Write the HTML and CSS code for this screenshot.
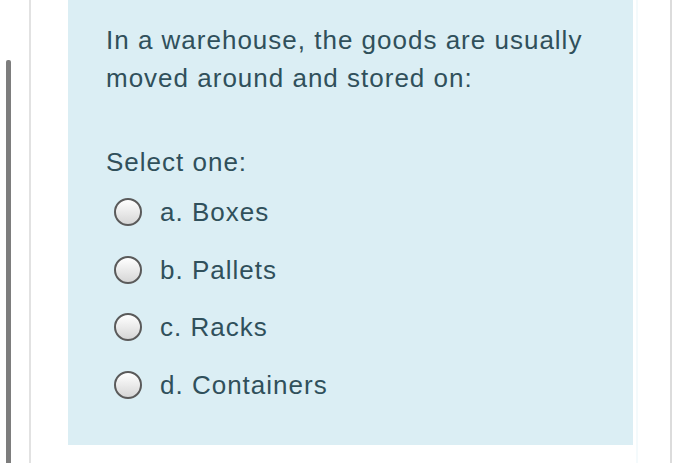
FILE: index.html
```html
<!DOCTYPE html>
<html>
<head>
<meta charset="utf-8">
<link rel="stylesheet" href="styles.css">
</head>
<body>
<div class="screen">
  <div class="gutter">
    <div class="scrollbar"></div>
    <div class="divider"></div>
  </div>
  <div class="panel">
    <div class="qtext">In a warehouse, the goods are usually moved around and stored on:</div>
    <div class="prompt">Select one:</div>
    <div class="answers">
      <div class="option"><span class="radio"></span><span class="label">a. Boxes</span></div>
      <div class="option"><span class="radio"></span><span class="label">b. Pallets</span></div>
      <div class="option"><span class="radio"></span><span class="label">c. Racks</span></div>
      <div class="option"><span class="radio"></span><span class="label">d. Containers</span></div>
    </div>
  </div>
  <div class="right">
    <div class="faint"></div>
    <div class="rline"></div>
  </div>
</div>
</body>
</html>
```

FILE: styles.css
```css
html, body {
  margin: 0;
  padding: 0;
  background: #ffffff;
}
.screen {
  display: flex;
  width: 700px;
  height: 463px;
  overflow: hidden;
  font-family: "Liberation Sans", Arial, sans-serif;
}
.gutter {
  width: 68px;
  flex: none;
  display: flex;
}
.scrollbar {
  width: 5px;
  margin-left: 6px;
  margin-top: 60px;
  background: #7d7d7d;
  border-radius: 2px 2px 0 0;
}
.divider {
  width: 2px;
  margin-left: 18px;
  background: #e2e2e2;
}
.panel {
  width: 565px;
  height: 445px;
  flex: none;
  background: #dbeef4;
  box-sizing: border-box;
  padding: 21px 10px 0 38px;
  color: #30505b;
  font-size: 26px;
  line-height: 38px;
  letter-spacing: 1px;
}
.qtext {
  width: 505px;
}
.prompt {
  margin-top: 46px;
}
.answers {
  margin-top: 2px;
}
.option {
  display: flex;
  align-items: center;
  height: 57.7px;
}
.radio {
  width: 24px;
  height: 24px;
  margin-left: 8px;
  margin-right: 18px;
  border: 2px solid #5a5a5a;
  border-radius: 50%;
  background: linear-gradient(#ffffff, #d6d6d6);
  flex: none;
}
.right {
  flex: 1;
  display: flex;
}
.faint {
  width: 2px;
  margin-left: 3px;
  background: #f4fafc;
}
.rline {
  width: 2px;
  margin-left: 32px;
  background: #dcdcdc;
}
```
